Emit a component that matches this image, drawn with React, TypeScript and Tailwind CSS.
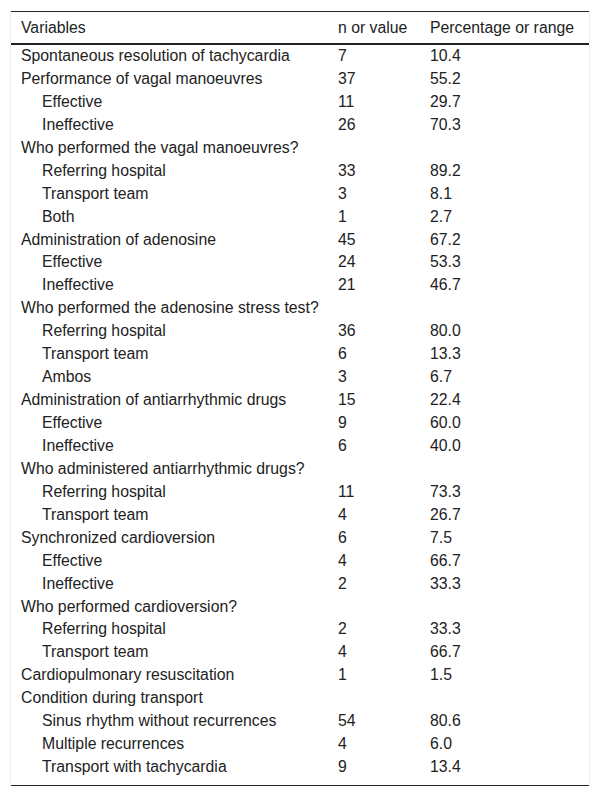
const rows: [string, string, string, boolean][] = [
  ["Spontaneous resolution of tachycardia", "7", "10.4", false],
  ["Performance of vagal manoeuvres", "37", "55.2", false],
  ["Effective", "11", "29.7", true],
  ["Ineffective", "26", "70.3", true],
  ["Who performed the vagal manoeuvres?", "", "", false],
  ["Referring hospital", "33", "89.2", true],
  ["Transport team", "3", "8.1", true],
  ["Both", "1", "2.7", true],
  ["Administration of adenosine", "45", "67.2", false],
  ["Effective", "24", "53.3", true],
  ["Ineffective", "21", "46.7", true],
  ["Who performed the adenosine stress test?", "", "", false],
  ["Referring hospital", "36", "80.0", true],
  ["Transport team", "6", "13.3", true],
  ["Ambos", "3", "6.7", true],
  ["Administration of antiarrhythmic drugs", "15", "22.4", false],
  ["Effective", "9", "60.0", true],
  ["Ineffective", "6", "40.0", true],
  ["Who administered antiarrhythmic drugs?", "", "", false],
  ["Referring hospital", "11", "73.3", true],
  ["Transport team", "4", "26.7", true],
  ["Synchronized cardioversion", "6", "7.5", false],
  ["Effective", "4", "66.7", true],
  ["Ineffective", "2", "33.3", true],
  ["Who performed cardioversion?", "", "", false],
  ["Referring hospital", "2", "33.3", true],
  ["Transport team", "4", "66.7", true],
  ["Cardiopulmonary resuscitation", "1", "1.5", false],
  ["Condition during transport", "", "", false],
  ["Sinus rhythm without recurrences", "54", "80.6", true],
  ["Multiple recurrences", "4", "6.0", true],
  ["Transport with tachycardia", "9", "13.4", true],
];

export default function App() {
  return (
    <div className="min-h-[798px] bg-white pl-[10px] pt-[11px] font-['Liberation_Sans',Arial,sans-serif] text-[15.8px] text-[#222]">
      <div className="w-[580px] border-x border-[#eeeeee]">
        <div className="grid grid-cols-[317px_92px_1fr] h-[34px] border-t border-[#222] border-b-2 items-center">
          <div className="pl-[10px]">Variables</div>
          <div className="pl-[10px]">n or value</div>
          <div className="pl-[10px]">Percentage or range</div>
        </div>
        <div className="border-b border-[#222] pb-[6px]">
          {rows.map(([label, n, pct, sub], i) => (
            <div key={i} className="grid grid-cols-[317px_92px_1fr] leading-[22.94px]">
              <div className={sub ? "pl-[31px]" : "pl-[10px]"}>{label}</div>
              <div className="pl-[10px]">{n}</div>
              <div className="pl-[10px]">{pct}</div>
            </div>
          ))}
        </div>
      </div>
    </div>
  );
}
